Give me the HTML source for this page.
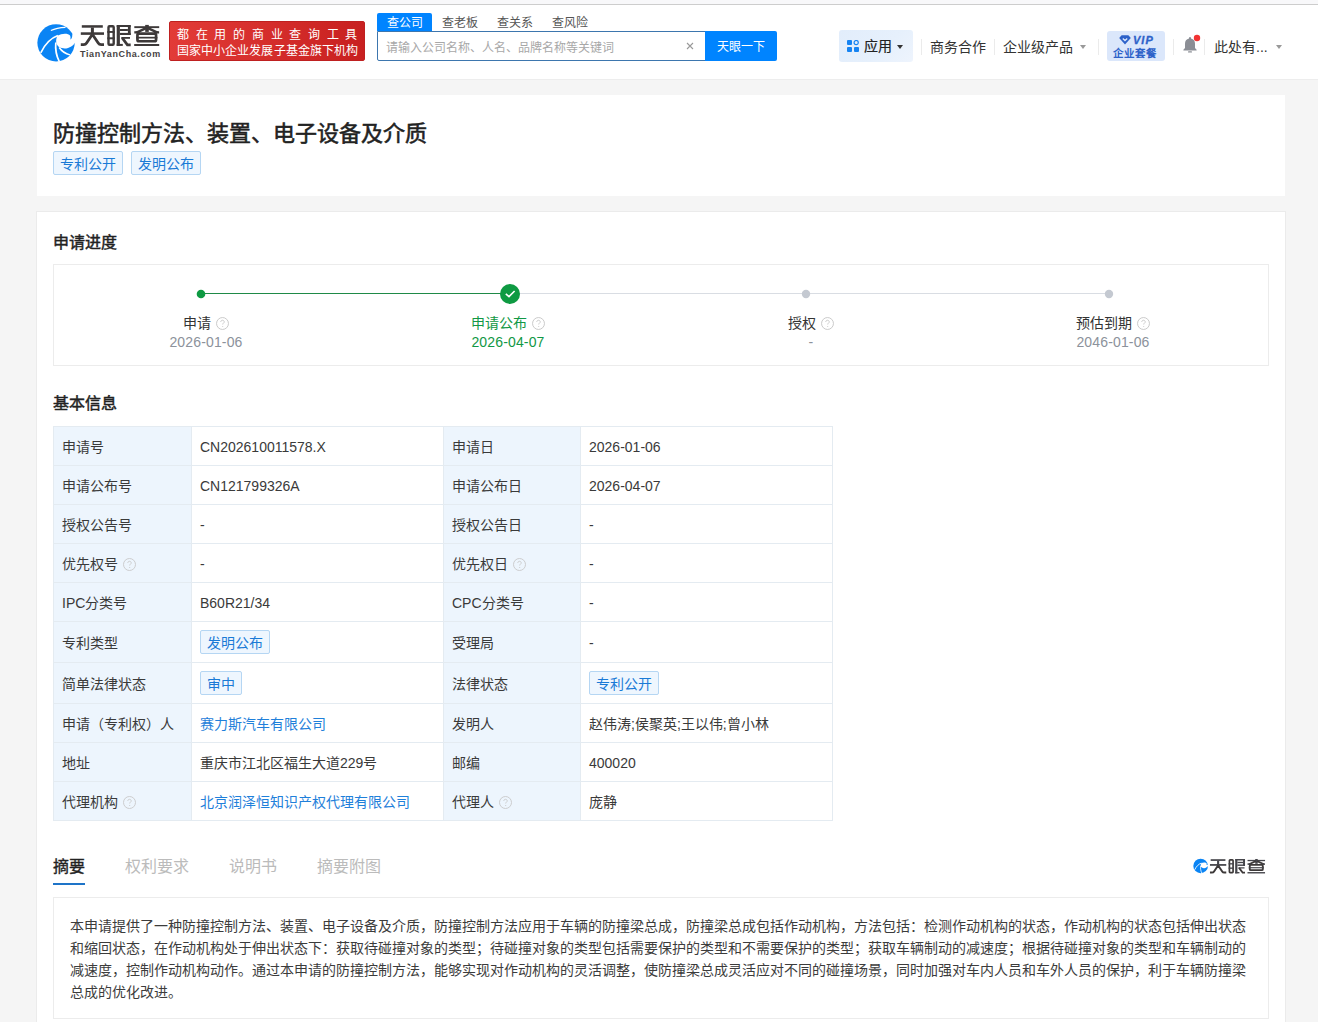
<!DOCTYPE html>
<html lang="zh-CN">
<head>
<meta charset="utf-8">
<style>
*{box-sizing:border-box;margin:0;padding:0}
html,body{width:1318px;height:1022px;overflow:hidden}
body{font-family:"Liberation Sans",sans-serif;background:#f5f5f5;color:#333;font-size:14px;position:relative}
.abs{position:absolute;white-space:nowrap}
.topstrip{left:0;top:0;width:1318px;height:5px;background:#f8f8fa;border-bottom:1px solid #cdcdcd}
.header{left:0;top:5px;width:1318px;height:75px;background:#fff;border-bottom:1px solid #ededed}
.card{background:#fff}
.c1{left:37px;top:95px;width:1248px;height:101px}
.c2{left:36px;top:211px;width:1250px;height:830px;border:1px solid #ebebeb}
.title{left:53px;top:117.5px;font-size:22px;font-weight:normal;-webkit-text-stroke:0.55px #222;color:#222;line-height:32px}
.tag{display:inline-block;height:24px;line-height:22px;padding:0 6px;border:1px solid #b5d6f3;background:#eef6fe;color:#1a7ad6;font-size:14px;border-radius:2px;vertical-align:top}
.h2{font-size:16px;font-weight:normal;-webkit-text-stroke:0.45px #222;color:#222;line-height:24px}
.prog{left:53px;top:264px;width:1216px;height:102px;border:1px solid #ececec}
.step{position:absolute;top:313px;width:240px;text-align:center;font-size:14px;line-height:20px;color:#333;white-space:nowrap}
.step .d{color:#8c929b;margin-top:-1px;letter-spacing:0.15px}
.step.g,.step.g .d{color:#119845}
.q{display:inline-block;width:13px;height:13px;vertical-align:-2px;margin-left:5px}
.tbl{left:53px;top:426px;width:780px;height:395px;border:1px solid #e4ebf1;background:#fff}
.lb{position:absolute;background:#edf5fd}
.hl{position:absolute;left:0;width:778px;height:1px;background:#e4ebf1}
.vl{position:absolute;top:0;width:1px;height:393px;background:#e4ebf1}
.cell{position:absolute;font-size:14px;line-height:20px;color:#3a3a3a;white-space:nowrap}
a{color:#1f80da;text-decoration:none}
.abstract{left:53px;top:897px;width:1216px;height:122px;border:1px solid #ececec;padding:17px 16px 0;font-size:14px;line-height:22px;color:#3c3c3c;white-space:normal}
.sep{position:absolute;width:1px;height:16px;background:#ebebeb;top:39px}
.caret{position:absolute;width:0;height:0;border-left:3.5px solid transparent;border-right:3.5px solid transparent;border-top:4px solid #999}
</style>
</head>
<body>
<svg width="0" height="0" style="position:absolute"><defs>
<g id="lt">
 <rect x="3.8" y="3.2" width="21" height="2.5"/>
 <rect x="12.9" y="5.5" width="3" height="7"/>
 <rect x="2.8" y="10.3" width="23.2" height="2.55"/>
 <path d="M14.3 12.4L8.6 21Q7.6 22.65 5.6 22.65L2.8 22.65M14.5 12.4L20.2 21Q21.2 22.65 23.2 22.65L26 22.65" fill="none" stroke="#3d3939" stroke-width="2.8"/>
 <rect x="30.5" y="4.25" width="5.2" height="18.45" rx="1" fill="none" stroke="#3d3939" stroke-width="2.4"/>
 <rect x="29.3" y="9" width="7.6" height="1.9"/>
 <rect x="29.3" y="15.3" width="7.6" height="2"/>
 <rect x="38.7" y="3.05" width="3.2" height="20.85"/>
 <rect x="38.7" y="3.05" width="14" height="1.95" rx=".6"/>
 <rect x="49.9" y="3.05" width="2.8" height="9.95"/>
 <rect x="41.9" y="7" width="8" height="2"/>
 <rect x="41.9" y="10.9" width="10.8" height="2.1"/>
 <rect x="38.7" y="21.9" width="6.1" height="2"/>
 <rect x="43.3" y="15" width="8.7" height="1.8"/>
 <path d="M44.2 15.9L49.4 22.9L52.7 22.9" fill="none" stroke="#3d3939" stroke-width="2.7"/>
 <rect x="56.3" y="4.2" width="24.9" height="1.9"/>
 <rect x="67.2" y="2.9" width="3.6" height="7"/>
 <path d="M68 6.1L58.5 10.6M70 6.1L79.5 10.6" fill="none" stroke="#3d3939" stroke-width="2.6"/>
 <rect x="56.3" y="9.2" width="5.3" height="2.3"/>
 <rect x="75.9" y="9.2" width="5.2" height="2.3"/>
 <rect x="59.45" y="11.55" width="18.6" height="7.7" rx="1.5" fill="none" stroke="#3d3939" stroke-width="2.7"/>
 <rect x="58.1" y="14.8" width="21.3" height="1.7"/>
 <rect x="56.2" y="22" width="25" height="2"/>
</g></defs></svg>
<div class="abs topstrip"></div>
<div class="abs header"></div>

<!-- logo -->
<svg class="abs" style="left:34px;top:20px" width="46" height="46" viewBox="0 0 1022 1022">
 <circle cx="490" cy="508" r="415" fill="#0a84f4"/>
 <path d="M520 350 C620 290 760 290 800 345 C815 370 812 410 808 435 C835 420 855 380 850 320 L1000 250 L1000 470 L930 470 C870 600 700 680 560 600 C490 560 470 450 520 350 Z" fill="#fff"/>
 <path d="M150 730 C250 520 380 400 530 345" stroke="#fff" stroke-width="36" fill="none"/>
 <path d="M375 235 C470 190 600 170 700 165" stroke="#fff" stroke-width="26" fill="none"/>
 <path d="M485 500 C470 650 500 800 560 920" stroke="#fff" stroke-width="38" fill="none"/>
 <path d="M560 610 C620 700 700 750 800 775" stroke="#fff" stroke-width="34" fill="none"/>
</svg>
<svg class="abs" style="left:78px;top:22px" width="84" height="27" viewBox="0 0 84 27" fill="#3d3939"><use href="#lt"/></svg>
<div class="abs" style="left:80px;top:49px;font-size:9px;font-weight:bold;color:#464242;line-height:10px;letter-spacing:0.6px">TianYanCha.com</div>
<div class="abs" style="left:169px;top:21px;width:196px;height:40px;background:linear-gradient(90deg,#e23b37,#c82020);border:1px solid #bf2020;border-radius:2px;color:#fff;font-size:12px;line-height:16px;padding-top:3px">
 <div style="letter-spacing:6.72px;padding-left:7px;padding-top:2px">都在用的商业查询工具</div>
 <div style="padding-left:7px;letter-spacing:0.07px">国家中小企业发展子基金旗下机构</div>
</div>

<!-- search -->
<div class="abs" style="left:377px;top:13px;width:55px;height:18px;background:#0084ff;color:#fff;font-size:12px;line-height:20px;text-align:center;border-radius:2px 2px 0 0">查公司</div>
<div class="abs" style="left:442px;top:14px;font-size:12px;line-height:18px;color:#555">查老板</div>
<div class="abs" style="left:497px;top:14px;font-size:12px;line-height:18px;color:#555">查关系</div>
<div class="abs" style="left:552px;top:14px;font-size:12px;line-height:18px;color:#555">查风险</div>
<div class="abs" style="left:377px;top:31px;width:330px;height:30px;border:1px solid #3d76ae;background:#fff;border-radius:0 0 0 2px"></div>
<div class="abs" style="left:386px;top:38.5px;font-size:12px;line-height:18px;color:#a8a8a8">请输入公司名称、人名、品牌名称等关键词</div>
<svg class="abs" style="left:686px;top:42px" width="8" height="8" viewBox="0 0 8 8"><path d="M1 1L7 7M7 1L1 7" stroke="#999" stroke-width="1.1"/></svg>
<div class="abs" style="left:705px;top:31px;width:72px;height:30px;background:#0084ff;color:#fff;font-size:12px;line-height:32px;text-align:center;border-radius:0 2px 2px 0">天眼一下</div>

<!-- right nav -->
<div class="abs" style="left:839px;top:30px;width:74px;height:32px;background:linear-gradient(135deg,#e2edfb 0%,#e6f0fc 60%,#eef4fd 100%);border-radius:3px"></div>
<svg class="abs" style="left:847px;top:40px" width="12" height="12" viewBox="0 0 12 12">
 <rect x="0" y="0" width="5" height="5" rx="1" fill="#1683f2"/>
 <circle cx="9.2" cy="2.6" r="2.1" fill="none" stroke="#1683f2" stroke-width="1.2"/>
 <rect x="0" y="7" width="5" height="5" rx="1" fill="#1683f2"/>
 <rect x="7" y="7" width="5" height="5" rx="1" fill="#1683f2"/>
</svg>
<div class="abs" style="left:864px;top:36px;font-size:14px;line-height:20px;color:#222;-webkit-text-stroke:0.2px #222">应用</div>
<div class="caret" style="left:897px;top:45px;border-top-color:#333"></div>
<div class="sep" style="left:921px"></div>
<div class="abs" style="left:930px;top:37px;font-size:14px;line-height:20px;color:#333">商务合作</div>
<div class="sep" style="left:994px"></div>
<div class="abs" style="left:1003px;top:37px;font-size:14px;line-height:20px;color:#333">企业级产品</div>
<div class="caret" style="left:1080px;top:45px"></div>
<div class="sep" style="left:1098px"></div>
<div class="abs" style="left:1107px;top:31px;width:58px;height:30px;background:#dbe7fb;border-radius:3px"></div>
<svg class="abs" style="left:1119px;top:35px" width="12" height="10" viewBox="0 0 12 10"><path d="M2.6 0.3H9.4L11.8 3L6 9.6L0.2 3Z" fill="#2d62c9"/><path d="M3.8 3.6L6 5.6L8.2 3.6" stroke="#dbe7fb" stroke-width="1.3" fill="none"/></svg>
<div class="abs" style="left:1133px;top:33.5px;font-size:11px;line-height:12px;font-weight:bold;font-style:italic;color:#2d62c9;letter-spacing:1px;-webkit-text-stroke:0.3px #2d62c9">VIP</div>
<div class="abs" style="left:1113px;top:46.3px;font-size:10.5px;line-height:15px;font-weight:bold;color:#2d62c9;letter-spacing:1.1px">企业套餐</div>
<div class="sep" style="left:1173px"></div>
<svg class="abs" style="left:1182px;top:36px" width="16" height="18" viewBox="0 0 16 18">
 <path d="M7 1.2h2v1.3c2.6.5 4 2.5 4 5.2v4.3l1.6 1.8v.8H1.4v-.8L3 12V7.7c0-2.7 1.4-4.7 4-5.2z" fill="#8b8e95"/>
 <rect x="6" y="15.3" width="4" height="1.3" rx=".6" fill="#8b8e95"/>
</svg>
<svg class="abs" style="left:1193px;top:34px" width="8" height="8"><circle cx="4" cy="4" r="3.2" fill="#f23333"/></svg>
<div class="sep" style="left:1204px"></div>
<div class="abs" style="left:1214px;top:37px;font-size:14px;line-height:20px;color:#333">此处有...</div>
<div class="caret" style="left:1276px;top:45px"></div>

<!-- card 1 -->
<div class="abs card c1"></div>
<div class="abs title">防撞控制方法、装置、电子设备及介质</div>
<div class="abs" style="left:53px;top:151px"><span class="tag" style="padding-top:1px">专利公开</span><span class="tag" style="margin-left:8px;padding-top:1px">发明公布</span></div>

<!-- card 2 -->
<div class="abs card c2"></div>
<div class="abs h2" style="left:53px;top:230.5px">申请进度</div>
<div class="abs prog"></div>
<div class="abs" style="left:201px;top:293px;width:309px;height:1px;background:#1f8a47"></div>
<div class="abs" style="left:510px;top:293px;width:599px;height:1px;background:#d9dde3"></div>
<svg class="abs" style="left:196px;top:289px" width="10" height="10"><circle cx="5" cy="5" r="4.3" fill="#0e9a42"/></svg>
<svg class="abs" style="left:500px;top:284px" width="20" height="20" viewBox="0 0 20 20"><circle cx="10" cy="10" r="10" fill="#0e9a42"/><path d="M5.8 9.8L9 12.6L14.6 7" stroke="#fff" stroke-width="1.6" fill="none"/></svg>
<svg class="abs" style="left:801px;top:289px" width="10" height="10"><circle cx="5" cy="5" r="4.2" fill="#c4c9d1"/></svg>
<svg class="abs" style="left:1104px;top:289px" width="10" height="10"><circle cx="5" cy="5" r="4.2" fill="#c4c9d1"/></svg>

<div class="step" style="left:86px">申请<svg class="q" viewBox="0 0 12 12"><circle cx="6" cy="6" r="5.5" fill="none" stroke="#c8c8c8" stroke-width="0.9"/><path d="M4.4 4.6c0-1 .7-1.6 1.6-1.6s1.6.6 1.6 1.5c0 1.1-1.4 1.2-1.4 2.4" stroke="#c8c8c8" stroke-width="0.9" fill="none"/><circle cx="6.2" cy="8.8" r=".5" fill="#c8c8c8"/></svg><div class="d">2026-01-06</div></div>
<div class="step g" style="left:388px">申请公布<svg class="q" viewBox="0 0 12 12"><circle cx="6" cy="6" r="5.5" fill="none" stroke="#c8c8c8" stroke-width="0.9"/><path d="M4.4 4.6c0-1 .7-1.6 1.6-1.6s1.6.6 1.6 1.5c0 1.1-1.4 1.2-1.4 2.4" stroke="#c8c8c8" stroke-width="0.9" fill="none"/><circle cx="6.2" cy="8.8" r=".5" fill="#c8c8c8"/></svg><div class="d">2026-04-07</div></div>
<div class="step" style="left:691px">授权<svg class="q" viewBox="0 0 12 12"><circle cx="6" cy="6" r="5.5" fill="none" stroke="#c8c8c8" stroke-width="0.9"/><path d="M4.4 4.6c0-1 .7-1.6 1.6-1.6s1.6.6 1.6 1.5c0 1.1-1.4 1.2-1.4 2.4" stroke="#c8c8c8" stroke-width="0.9" fill="none"/><circle cx="6.2" cy="8.8" r=".5" fill="#c8c8c8"/></svg><div class="d">-</div></div>
<div class="step" style="left:993px">预估到期<svg class="q" viewBox="0 0 12 12"><circle cx="6" cy="6" r="5.5" fill="none" stroke="#c8c8c8" stroke-width="0.9"/><path d="M4.4 4.6c0-1 .7-1.6 1.6-1.6s1.6.6 1.6 1.5c0 1.1-1.4 1.2-1.4 2.4" stroke="#c8c8c8" stroke-width="0.9" fill="none"/><circle cx="6.2" cy="8.8" r=".5" fill="#c8c8c8"/></svg><div class="d">2046-01-06</div></div>

<div class="abs h2" style="left:53px;top:392px">基本信息</div>

<!-- table -->
<div class="abs tbl">
 <div class="lb" style="left:0;top:0;width:137px;height:393px"></div>
 <div class="lb" style="left:390px;top:0;width:137px;height:393px"></div>
 <div class="vl" style="left:137px"></div>
 <div class="vl" style="left:389px"></div>
 <div class="vl" style="left:526px"></div>
 <div class="hl" style="top:38px"></div>
 <div class="hl" style="top:77px"></div>
 <div class="hl" style="top:116px"></div>
 <div class="hl" style="top:155px"></div>
 <div class="hl" style="top:194px"></div>
 <div class="hl" style="top:235px"></div>
 <div class="hl" style="top:276px"></div>
 <div class="hl" style="top:315px"></div>
 <div class="hl" style="top:354px"></div>
</div>
<div id="cells">
<div class="cell" style="left:62px;top:437.0px">申请号</div>
<div class="cell" style="left:200px;top:437.0px">CN202610011578.X</div>
<div class="cell" style="left:452px;top:437.0px">申请日</div>
<div class="cell" style="left:589px;top:437.0px">2026-01-06</div>
<div class="cell" style="left:62px;top:476.0px">申请公布号</div>
<div class="cell" style="left:200px;top:476.0px">CN121799326A</div>
<div class="cell" style="left:452px;top:476.0px">申请公布日</div>
<div class="cell" style="left:589px;top:476.0px">2026-04-07</div>
<div class="cell" style="left:62px;top:515.0px">授权公告号</div>
<div class="cell" style="left:200px;top:515.0px">-</div>
<div class="cell" style="left:452px;top:515.0px">授权公告日</div>
<div class="cell" style="left:589px;top:515.0px">-</div>
<div class="cell" style="left:62px;top:554.0px">优先权号<svg class="q" viewBox="0 0 13 13"><circle cx="6.5" cy="6.5" r="6" fill="none" stroke="#c8c8c8" stroke-width="0.9"/><path d="M4.8 5c0-1 .7-1.7 1.7-1.7s1.7.7 1.7 1.6c0 1.2-1.5 1.3-1.5 2.6" stroke="#c8c8c8" stroke-width="0.9" fill="none"/><circle cx="6.7" cy="9.5" r=".55" fill="#c8c8c8"/></svg></div>
<div class="cell" style="left:200px;top:554.0px">-</div>
<div class="cell" style="left:452px;top:554.0px">优先权日<svg class="q" viewBox="0 0 13 13"><circle cx="6.5" cy="6.5" r="6" fill="none" stroke="#c8c8c8" stroke-width="0.9"/><path d="M4.8 5c0-1 .7-1.7 1.7-1.7s1.7.7 1.7 1.6c0 1.2-1.5 1.3-1.5 2.6" stroke="#c8c8c8" stroke-width="0.9" fill="none"/><circle cx="6.7" cy="9.5" r=".55" fill="#c8c8c8"/></svg></div>
<div class="cell" style="left:589px;top:554.0px">-</div>
<div class="cell" style="left:62px;top:593.0px">IPC分类号</div>
<div class="cell" style="left:200px;top:593.0px">B60R21/34</div>
<div class="cell" style="left:452px;top:593.0px">CPC分类号</div>
<div class="cell" style="left:589px;top:593.0px">-</div>
<div class="cell" style="left:62px;top:633.0px">专利类型</div>
<div class="cell" style="left:200px;top:630.0px;line-height:24px"><span class="tag" style="padding-top:1px">发明公布</span></div>
<div class="cell" style="left:452px;top:633.0px">受理局</div>
<div class="cell" style="left:589px;top:633.0px">-</div>
<div class="cell" style="left:62px;top:674.0px">简单法律状态</div>
<div class="cell" style="left:200px;top:671.0px;line-height:24px"><span class="tag" style="padding-top:1px">审中</span></div>
<div class="cell" style="left:452px;top:674.0px">法律状态</div>
<div class="cell" style="left:589px;top:671.0px;line-height:24px"><span class="tag" style="padding-top:1px">专利公开</span></div>
<div class="cell" style="left:62px;top:714.0px">申请（专利权）人</div>
<div class="cell" style="left:200px;top:714.0px"><a>赛力斯汽车有限公司</a></div>
<div class="cell" style="left:452px;top:714.0px">发明人</div>
<div class="cell" style="left:589px;top:714.0px">赵伟涛;侯聚英;王以伟;曾小林</div>
<div class="cell" style="left:62px;top:753.0px">地址</div>
<div class="cell" style="left:200px;top:753.0px">重庆市江北区福生大道229号</div>
<div class="cell" style="left:452px;top:753.0px">邮编</div>
<div class="cell" style="left:589px;top:753.0px">400020</div>
<div class="cell" style="left:62px;top:792.0px">代理机构<svg class="q" viewBox="0 0 13 13"><circle cx="6.5" cy="6.5" r="6" fill="none" stroke="#c8c8c8" stroke-width="0.9"/><path d="M4.8 5c0-1 .7-1.7 1.7-1.7s1.7.7 1.7 1.6c0 1.2-1.5 1.3-1.5 2.6" stroke="#c8c8c8" stroke-width="0.9" fill="none"/><circle cx="6.7" cy="9.5" r=".55" fill="#c8c8c8"/></svg></div>
<div class="cell" style="left:200px;top:792.0px"><a>北京润泽恒知识产权代理有限公司</a></div>
<div class="cell" style="left:452px;top:792.0px">代理人<svg class="q" viewBox="0 0 13 13"><circle cx="6.5" cy="6.5" r="6" fill="none" stroke="#c8c8c8" stroke-width="0.9"/><path d="M4.8 5c0-1 .7-1.7 1.7-1.7s1.7.7 1.7 1.6c0 1.2-1.5 1.3-1.5 2.6" stroke="#c8c8c8" stroke-width="0.9" fill="none"/><circle cx="6.7" cy="9.5" r=".55" fill="#c8c8c8"/></svg></div>
<div class="cell" style="left:589px;top:792.0px">庞静</div>
</div>

<div class="abs" style="left:53px;top:855px;font-size:16px;font-weight:normal;-webkit-text-stroke:0.35px #222;color:#222;line-height:24px">摘要</div>
<div class="abs" style="left:53px;top:883px;width:32px;height:2px;background:#1e74c8"></div>
<div class="abs" style="left:125px;top:855px;font-size:16px;color:#bbb;line-height:24px">权利要求</div>
<div class="abs" style="left:229px;top:855px;font-size:16px;color:#bbb;line-height:24px">说明书</div>
<div class="abs" style="left:317px;top:855px;font-size:16px;color:#bbb;line-height:24px">摘要附图</div>

<svg class="abs" style="left:1192px;top:857px" width="18" height="18" viewBox="0 0 1022 1022">
 <circle cx="490" cy="508" r="415" fill="#0a84f4"/>
 <path d="M520 350 C620 290 790 290 830 360 L815 430 L930 470 C870 600 700 680 560 600 C490 560 470 450 520 350 Z" fill="#fff"/>
 <path d="M150 730 C250 520 380 400 530 345" stroke="#fff" stroke-width="50" fill="none"/>
 <path d="M485 500 C470 650 500 800 560 920" stroke="#fff" stroke-width="45" fill="none"/>
</svg>
<svg class="abs" style="left:1208.4px;top:857.1px;overflow:visible" width="59" height="18.5" viewBox="0 0 84 27" preserveAspectRatio="none" fill="#45454b"><use href="#lt"/></svg>

<div class="abs abstract">本申请提供了一种防撞控制方法、装置、电子设备及介质，防撞控制方法应用于车辆的防撞梁总成，防撞梁总成包括作动机构，方法包括：检测作动机构的状态，作动机构的状态包括伸出状态和缩回状态，在作动机构处于伸出状态下：获取待碰撞对象的类型；待碰撞对象的类型包括需要保护的类型和不需要保护的类型；获取车辆制动的减速度；根据待碰撞对象的类型和车辆制动的减速度，控制作动机构动作。通过本申请的防撞控制方法，能够实现对作动机构的灵活调整，使防撞梁总成灵活应对不同的碰撞场景，同时加强对车内人员和车外人员的保护，利于车辆防撞梁总成的优化改进。</div>
</body>
</html>
